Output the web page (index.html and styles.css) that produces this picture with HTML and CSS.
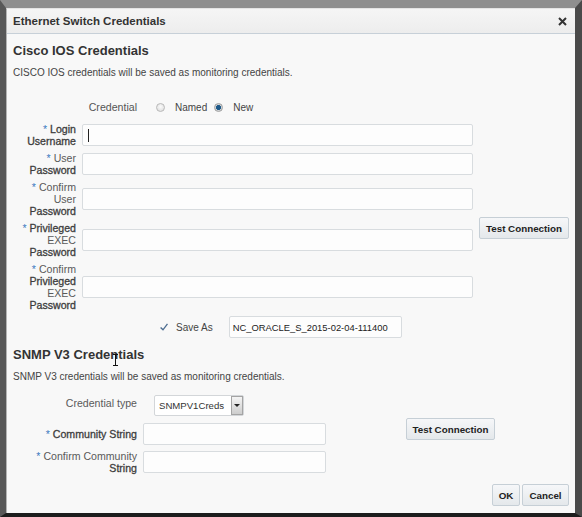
FILE: index.html
```html
<!DOCTYPE html>
<html>
<head>
<meta charset="utf-8">
<link rel="stylesheet" href="styles.css">
</head>
<body>
<div class="screen">
  <div class="dialog">
    <div class="titlebar">
      <span class="title">Ethernet Switch Credentials</span>
      <svg class="close" width="9" height="9" viewBox="0 0 9 9"><path d="M1 1 L8 8 M8 1 L1 8" stroke="#333" stroke-width="2" fill="none"/></svg>
    </div>
    <div class="body">
      <h2 class="heading">Cisco IOS Credentials</h2>
      <p class="desc">CISCO IOS credentials will be saved as monitoring credentials.</p>
      <div class="cred-row">
        <span class="cred-label">Credential</span>
        <span class="radio"></span><span class="opt">Named</span>
        <span class="radio on"></span><span class="opt">New</span>
      </div>
      <div class="cisco-grid">
        <div class="lbl"><span class="req">*</span> <span class="b">Login</span><br><span class="b">Username</span></div>
        <div class="field"><span class="caret"></span></div>
        <div></div>

        <div class="lbl"><span class="req">*</span> User<br><span class="b">Password</span></div>
        <div class="field"></div>
        <div></div>

        <div class="lbl"><span class="req">*</span> Confirm<br>User<br><span class="b">Password</span></div>
        <div class="field"></div>
        <div></div>

        <div class="lbl"><span class="req">*</span> <span class="b">Privileged</span><br>EXEC<br><span class="b">Password</span></div>
        <div class="field"></div>
        <button class="btn test1">Test Connection</button>

        <div class="lbl"><span class="req">*</span> Confirm<br><span class="b">Privileged</span><br>EXEC<br><span class="b">Password</span></div>
        <div class="field"></div>
        <div></div>
      </div>
      <div class="saveas-row">
        <svg class="check" width="8" height="8" viewBox="0 0 8 8"><path d="M0.6 4.4 L3 6.8 L7.5 0.8" stroke="#4d6d91" stroke-width="1.4" fill="none"/></svg>
        <span class="saveas">Save As</span>
        <div class="field saveas-field">NC_ORACLE_S_2015-02-04-111400</div>
      </div>

      <h2 class="heading snmp-heading">SNMP V3 Credentials</h2>
      <p class="desc">SNMP V3 credentials will be saved as monitoring credentials.</p>
      <div class="snmp-grid">
        <div class="lbl lbl-top">Credential type</div>
        <div class="select"><span class="select-text">SNMPV1Creds</span><span class="select-btn"><span class="tri"></span></span></div>
        <div></div>

        <div class="lbl"><span class="req">*</span> <span class="b">Community String</span></div>
        <div class="field"></div>
        <button class="btn test2">Test Connection</button>

        <div class="lbl"><span class="req">*</span> Confirm Community<br><span class="b">String</span></div>
        <div class="field"></div>
        <div></div>
      </div>
      <div class="footer">
        <button class="btn ok">OK</button>
        <button class="btn cancel">Cancel</button>
      </div>
    </div>
  </div>
  <svg class="ibeam" width="7" height="12" viewBox="0 0 7 12"><path d="M1 0.5 H6 M3.5 0.5 V11.5 M1 11.5 H6" stroke="#111" stroke-width="1" fill="none"/></svg>
</div>
</body>
</html>
```

FILE: styles.css
```css
* { box-sizing: border-box; }
html, body { margin: 0; padding: 0; }
body {
  font-family: "Liberation Sans", Arial, sans-serif;
  background: #1d1d1d;
}
.screen {
  position: relative;
  width: 582px;
  height: 517px;
  border-top: 8px solid #8f8f8f;
  border-left: 6px solid #585858;
  border-right: 7px solid #4a4a4a;
  border-bottom: 4px solid #1d1d1d;
  background: #f8f8f8;
}
.dialog {
  height: 100%;
  border-left: 1px solid #b4b4b4;
  border-top: 1px solid #e4e4e4;
  background: #f8f8f8;
  display: flex;
  flex-direction: column;
}
.titlebar {
  height: 25px;
  flex: none;
  border-bottom: 1px solid #c7d0d8;
  background: linear-gradient(#f5f5f5, #ededed);
  display: flex;
  align-items: center;
  justify-content: space-between;
  padding: 0 8px 0 6px;
}
.title {
  font-size: 11.5px;
  font-weight: bold;
  color: #333;
}
.close { display: block; }
.body {
  flex: 1;
  padding: 9px 6px 0 6px;
  display: flex;
  flex-direction: column;
}
.heading {
  margin: 0;
  font-size: 13px;
  line-height: 16px;
  font-weight: bold;
  color: #333;
}
.desc {
  margin: 7px 0 0;
  font-size: 10px;
  line-height: 14px;
  color: #444;
}
.cred-row {
  margin-top: 19px;
  height: 16px;
  display: flex;
  align-items: center;
}
.cred-label {
  width: 124px;
  text-align: right;
  font-size: 10.6px;
  color: #555;
  margin-right: 19px;
}
.radio {
  width: 9px;
  height: 9px;
  border-radius: 50%;
  border: 1px solid #b9b9b9;
  background: radial-gradient(circle at 50% 40%, #fbfbfb, #d9d9d9);
}
.radio.on {
  border-color: #a0a0a0;
  background: radial-gradient(circle, #1c5888 0, #1c5888 2.2px, #cfd3d6 2.8px);
}
.opt {
  font-size: 10px;
  color: #444;
  margin-left: 10px;
  margin-right: 7px;
}
.cisco-grid {
  margin-top: 8px;
  display: grid;
  grid-template-columns: 63px 391px 90px;
  column-gap: 6px;
  row-gap: 5px;
  align-items: center;
}
.lbl {
  font-size: 10.6px;
  line-height: 12px;
  text-align: right;
  color: #5a5a5a;
}
.lbl .b {
  color: #3d3d3d;
  -webkit-text-stroke: 0.3px #3d3d3d;
}
.req {
  color: #3a78c0;
}
.field {
  height: 22px;
  border: 1px solid #d8dcdf;
  border-radius: 2px;
  background: #fdfdfd;
  display: flex;
  align-items: center;
  padding-left: 5px;
}
.caret {
  width: 1px;
  height: 13px;
  background: #222;
}
.btn {
  height: 22px;
  padding: 0;
  font-family: "Liberation Sans", Arial, sans-serif;
  font-size: 9.8px;
  font-weight: bold;
  color: #222;
  border: 1px solid #c6cfd6;
  border-radius: 2px;
  background: linear-gradient(#f6f7f9, #e4e8eb);
}
.test1 {
  width: 90px;
  align-self: start;
  margin-top: -5px;
}
.saveas-row {
  margin-top: 5px;
  height: 22px;
  display: flex;
  align-items: center;
}
.check {
  margin-left: 147px;
  display: block;
}
.saveas {
  margin-left: 8px;
  font-size: 10px;
  color: #444;
}
.saveas-field {
  margin-left: 16px;
  width: 173px;
  padding-left: 3px;
  font-size: 9.4px;
  color: #222;
}
.snmp-heading { margin-top: 9px; }
.snmp-grid {
  margin-top: 11px;
  display: grid;
  grid-template-columns: 124px 183px auto;
  column-gap: 6px;
  row-gap: 5px;
  align-items: center;
}
.lbl-top {
  align-self: start;
  line-height: 16px;
}
.select {
  align-self: start;
  margin-left: 11px;
  width: 90px;
  height: 21px;
  margin-bottom: 2px;
  border: 1px solid #d3d6d9;
  border-radius: 2px;
  background: #fff;
  display: flex;
  align-items: center;
  justify-content: space-between;
  padding: 1px 0 1px 4px;
}
.select-text {
  font-size: 9.6px;
  color: #333;
}
.select-btn {
  width: 12px;
  height: 19px;
  border: 1px solid #a4a4a4;
  background: linear-gradient(#f4f4f4, #cdcdcd);
  display: flex;
  align-items: center;
  justify-content: center;
}
.tri {
  width: 0;
  height: 0;
  border-left: 3px solid transparent;
  border-right: 3px solid transparent;
  border-top: 3px solid #222;
}
.test2 {
  width: 89px;
  justify-self: start;
  align-self: start;
  margin-top: -5px;
  margin-left: 74px;
}
.footer {
  margin-top: 10px;
  display: flex;
  justify-content: flex-end;
  gap: 2px;
}
.ok { width: 28px; }
.cancel { width: 47px; }
.ibeam {
  position: absolute;
  left: 106px;
  top: 346px;
}
```
